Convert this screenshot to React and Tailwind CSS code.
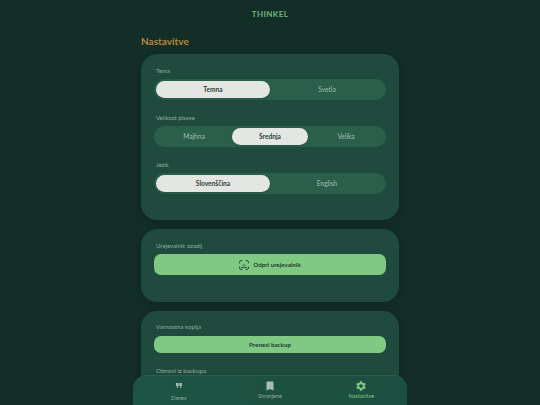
import { MdBookmark, MdSettings } from 'react-icons/md'

function Segmented({ options, active }) {
  return (
    <div className="flex h-[21px] rounded-full bg-[#2a5f4c] p-[2px]">
      {options.map((o) => (
        <div
          key={o}
          className={`flex flex-1 items-center justify-center rounded-full text-[6.6px] ${
            o === active ? 'bg-[#e3e6e3] font-bold text-[#2b4239] shadow-sm' : 'text-[#a3bcb0]'
          }`}
        >
          {o}
        </div>
      ))}
    </div>
  )
}

function Label({ children, large }) {
  return (
    <div className={`mb-[4px] px-[2px] leading-[8px] text-[#93aca0] ${large ? 'text-[6.2px]' : 'text-[6px]'}`}>
      {children}
    </div>
  )
}

function QuoteIcon() {
  return (
    <svg width="6" height="6" viewBox="0 0 6 6" fill="#a9bdb3">
      <path d="M0 0h2.6v2.8L1.6 5H.7l.6-2H0z" />
      <path d="M3.3 0h2.6v2.8L4.9 5H4l.6-2H3.3z" />
    </svg>
  )
}

function EditorIcon() {
  return (
    <svg width="10" height="10" viewBox="0 0 10 10" fill="none" stroke="#1f3d32" strokeWidth="0.9" strokeLinecap="round">
      <path d="M.6 3V1.8C.6 1.1 1.1.6 1.8.6H3M7 .6h1.2c.7 0 1.2.5 1.2 1.2V3M9.4 7v1.2c0 .7-.5 1.2-1.2 1.2H7M3 9.4H1.8C1.1 9.4.6 8.9.6 8.2V7" />
      <path d="M2.4 7.4h5.2M4 5.6l1-1 1 1" />
    </svg>
  )
}

function NavItem({ icon, label, active, low }) {
  return (
    <div className="flex flex-1 flex-col items-center">
      <div className="flex h-[11px] items-center">{icon}</div>
      <span className={`${low ? 'mt-[4px]' : 'mt-[2px]'} text-[5.5px] leading-[7px] ${active ? 'text-[#7fc983]' : 'text-[#93aca0]'}`}>
        {label}
      </span>
    </div>
  )
}

export default function App() {
  return (
    <div className="relative h-[405px] w-[540px] overflow-hidden bg-[#132e27] font-['Lato',sans-serif]">
      <div className="pt-[8px] text-center text-[8px] font-bold leading-[12px] tracking-[0.4px] text-[#6fb67c]">THINKEL</div>

      <div className="mx-auto w-[258px] pt-[15px]">
        <h1 className="mb-[6px] text-[10px] font-bold leading-[13px] text-[#b9873c]">Nastavitve</h1>

        <div className="mb-[9px] h-[166px] rounded-[16px] bg-[#1f4a3d] px-[13px] pt-[13px] shadow-[0_2px_10px_rgba(0,0,0,0.2)]">
          <Label>Tema</Label>
          <Segmented options={['Temna', 'Svetla']} active="Temna" />
          <div className="h-[14px]" />
          <Label>Velikost pisave</Label>
          <Segmented options={['Majhna', 'Srednja', 'Velika']} active="Srednja" />
          <div className="h-[14px]" />
          <Label>Jezik</Label>
          <Segmented options={['Slovenščina', 'English']} active="Slovenščina" />
        </div>

        <div className="mb-[9px] h-[73px] rounded-[16px] bg-[#1f4a3d] px-[13px] pt-[13px] shadow-[0_2px_10px_rgba(0,0,0,0.2)]">
          <Label>Urejevalnik ozadij</Label>
          <div className="flex h-[21px] items-center justify-center gap-[4px] rounded-[7px] bg-[#7fc983] text-[6.2px] font-bold text-[#1f3d32]">
            <EditorIcon />
            Odpri urejevalnik
          </div>
        </div>

        <div className="h-[100px] rounded-[16px] bg-[#1f4a3d] px-[13px] pt-[12px] shadow-[0_2px_10px_rgba(0,0,0,0.2)]">
          <Label large>Varnostna kopija</Label>
          <div className="mt-[5px] flex h-[17px] items-center justify-center rounded-[7px] bg-[#7fc983] text-[6.2px] font-bold text-[#1f3d32]">
            Prenesi backup
          </div>
          <div className="h-[14px]" />
          <Label large>Obnovi iz backupa</Label>
        </div>
      </div>

      <nav className="absolute bottom-0 left-[133px] flex h-[30px] w-[274px] rounded-t-[14px] border-t border-[#2a5f4c] bg-gradient-to-r from-[#1d5443] to-[#1c4f3f] pt-[4px]">
        <NavItem icon={<QuoteIcon />} label="Danes" low />
        <NavItem icon={<MdBookmark size={12} color="#a9bdb3" />} label="Shranjene" />
        <NavItem icon={<MdSettings size={12} color="#7fc983" />} label="Nastavitve" active />
      </nav>
    </div>
  )
}
